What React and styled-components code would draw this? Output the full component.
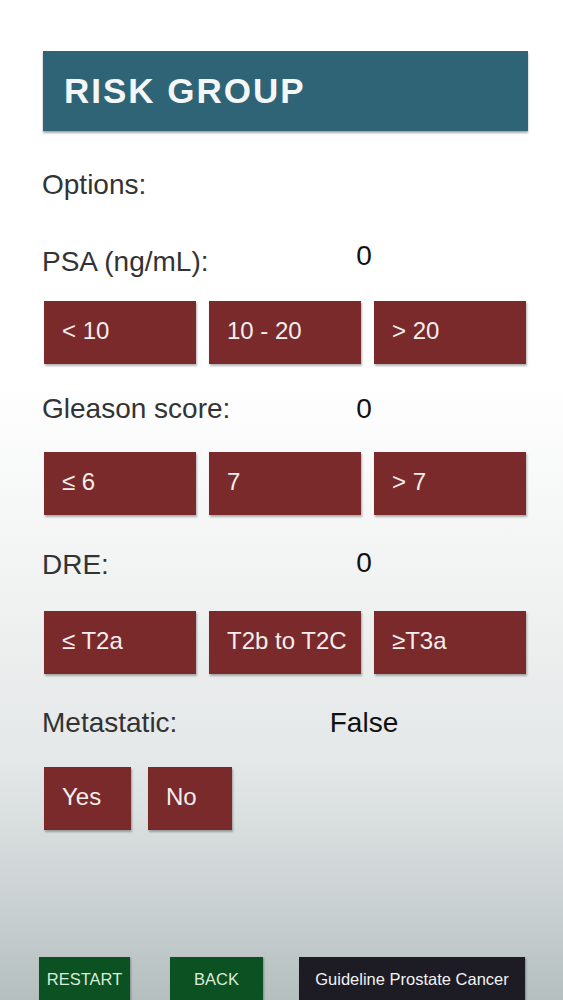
import React from "react";
import { styled, createGlobalStyle } from "styled-components";

const GlobalStyle = createGlobalStyle`
  html, body {
    margin: 0;
    padding: 0;
  }
  body {
    font-family: "Liberation Sans", Arial, sans-serif;
  }
`;

const Screen = styled.div`
  width: 563px;
  height: 1000px;
  overflow: hidden;
  background: linear-gradient(
    to bottom,
    #ffffff 0%,
    #ffffff 38%,
    #f0f1f1 60%,
    #e4e8e8 76%,
    #cfd5d6 88%,
    #b5bfc0 100%
  );
`;

const Content = styled.main`
  padding: 51px 35px 0 42px;
`;

const Header = styled.header`
  width: 485px;
  height: 80px;
  margin-left: 1px;
  background-color: #2f6476;
  box-shadow: 0 2px 2px rgba(0, 0, 0, 0.35);
  display: flex;
  align-items: center;
  padding-left: 21px;
  box-sizing: border-box;
`;

const Title = styled.h1`
  margin: 0;
  color: #f4f7f8;
  font-size: 35px;
  font-weight: 700;
  letter-spacing: 2px;
`;

const Options = styled.p`
  margin: 38px 0 0;
  font-size: 28px;
  line-height: 32px;
  color: #333;
`;

const FieldRow = styled.div`
  display: grid;
  grid-template-columns: 260px 124px;
  margin-top: ${(p) => p.$top}px;
  font-size: 28px;
  line-height: 32px;
`;

const Label = styled.span`
  color: #333;
`;

const Value = styled.span`
  color: #111;
  text-align: center;
  position: relative;
  top: ${(p) => p.$shift || 0}px;
`;

const ChoiceRow = styled.div`
  display: flex;
  gap: ${(p) => p.$gap || 13}px;
  margin: ${(p) => p.$top}px 0 0 2px;
`;

const Choice = styled.button`
  width: ${(p) => p.$w || 152}px;
  height: 63px;
  border: none;
  padding: 0 0 4px 18px;
  text-align: left;
  background-color: #7b2a2b;
  color: #f3eeee;
  font-family: "Liberation Sans", Arial, sans-serif;
  font-size: 24px;
  box-shadow: 1px 2px 2px rgba(0, 0, 0, 0.3);
  cursor: pointer;
`;

const Footer = styled.footer`
  display: flex;
  margin: 127px 0 0 39px;
`;

const FooterButton = styled.button`
  width: ${(p) => p.$w}px;
  height: 50px;
  margin-left: ${(p) => p.$ml || 0}px;
  border: none;
  padding: 0 0 6px;
  background-color: ${(p) => (p.$dark ? "#1d1c24" : "#0b5121")};
  color: ${(p) => (p.$dark ? "#f2f2f2" : "#d9ecd9")};
  font-family: "Liberation Sans", Arial, sans-serif;
  font-size: 16.5px;
  box-shadow: 1px 1px 2px rgba(0, 0, 0, 0.3);
  cursor: pointer;
`;

export default function App() {
  return (
    <Screen>
      <GlobalStyle />
      <Content>
        <Header>
          <Title>RISK GROUP</Title>
        </Header>
        <Options>Options:</Options>

        <FieldRow $top={45}>
          <Label>PSA (ng/mL):</Label>
          <Value $shift={-6}>0</Value>
        </FieldRow>
        <ChoiceRow $top={23}>
          <Choice>&lt; 10</Choice>
          <Choice>10 - 20</Choice>
          <Choice>&gt; 20</Choice>
        </ChoiceRow>

        <FieldRow $top={29}>
          <Label>Gleason score:</Label>
          <Value>0</Value>
        </FieldRow>
        <ChoiceRow $top={27}>
          <Choice>≤ 6</Choice>
          <Choice>7</Choice>
          <Choice>&gt; 7</Choice>
        </ChoiceRow>

        <FieldRow $top={34}>
          <Label>DRE:</Label>
          <Value $shift={-2}>0</Value>
        </FieldRow>
        <ChoiceRow $top={30}>
          <Choice>≤ T2a</Choice>
          <Choice>T2b to T2C</Choice>
          <Choice>≥T3a</Choice>
        </ChoiceRow>

        <FieldRow $top={33}>
          <Label>Metastatic:</Label>
          <Value>False</Value>
        </FieldRow>
        <ChoiceRow $top={28} $gap={17}>
          <Choice $w={87}>Yes</Choice>
          <Choice $w={84}>No</Choice>
        </ChoiceRow>
      </Content>

      <Footer>
        <FooterButton $w={91}>RESTART</FooterButton>
        <FooterButton $w={93} $ml={40}>BACK</FooterButton>
        <FooterButton $w={226} $ml={36} $dark>
          Guideline Prostate Cancer
        </FooterButton>
      </Footer>
    </Screen>
  );
}
